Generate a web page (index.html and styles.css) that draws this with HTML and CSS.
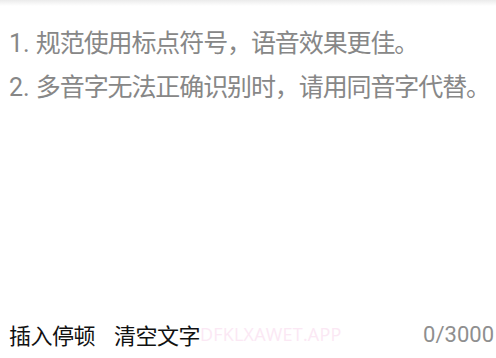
FILE: index.html
```html
<!DOCTYPE html>
<html lang="zh-CN">
<head>
<meta charset="utf-8">
<link rel="stylesheet" href="styles.css">
</head>
<body>
<div class="page">
  <div class="topshade"></div>
  <div class="hints">
    <p class="hint"><span class="num">1. </span>规范使用标点符号，语音效果更佳。</p>
    <p class="hint"><span class="num">2. </span>多音字无法正确识别时，请用同音字代替。</p>
  </div>
  <div class="bar">
    <div class="actions">
      <span class="action">插入停顿</span>
      <span class="action">清空文字</span>
    </div>
    <span class="count">0/3000</span>
    <span class="watermark">DFKLXAWET.APP</span>
  </div>
</div>
</body>
</html>
```
FILE: styles.css
```css
html, body {
  margin: 0;
  padding: 0;
  background: #fff;
}
.page {
  position: relative;
  width: 496px;
  height: 358px;
  display: flex;
  flex-direction: column;
  font-family: Roboto, "Noto Sans CJK SC", sans-serif;
  overflow: hidden;
}
.topshade {
  position: absolute;
  left: 0;
  right: 0;
  top: 0;
  height: 6px;
  background: linear-gradient(#ebebeb, rgba(255,255,255,0));
}
.hints {
  padding: 22px 0 0 9px;
}
.hint {
  margin: 0;
  font-size: 25px;
  letter-spacing: -1.1px;
  line-height: 44px;
  color: #878787;
  white-space: nowrap;
}
.num {
  letter-spacing: 0;
}
.bar {
  position: relative;
  margin-top: auto;
  height: 48px;
  display: flex;
  align-items: center;
  justify-content: space-between;
  padding: 0 2px 0 9px;
}
.actions {
  display: flex;
  gap: 19px;
}
.action {
  font-size: 22px;
  letter-spacing: -0.5px;
  color: #111;
}
.count {
  font-size: 22px;
  color: #8f8f8f;
}
.watermark {
  position: absolute;
  left: 200px;
  top: 12px;
  font-family: "Open Sans", sans-serif;
  font-size: 18px;
  color: #fbe8f4;
  letter-spacing: 0.2px;
}
```
